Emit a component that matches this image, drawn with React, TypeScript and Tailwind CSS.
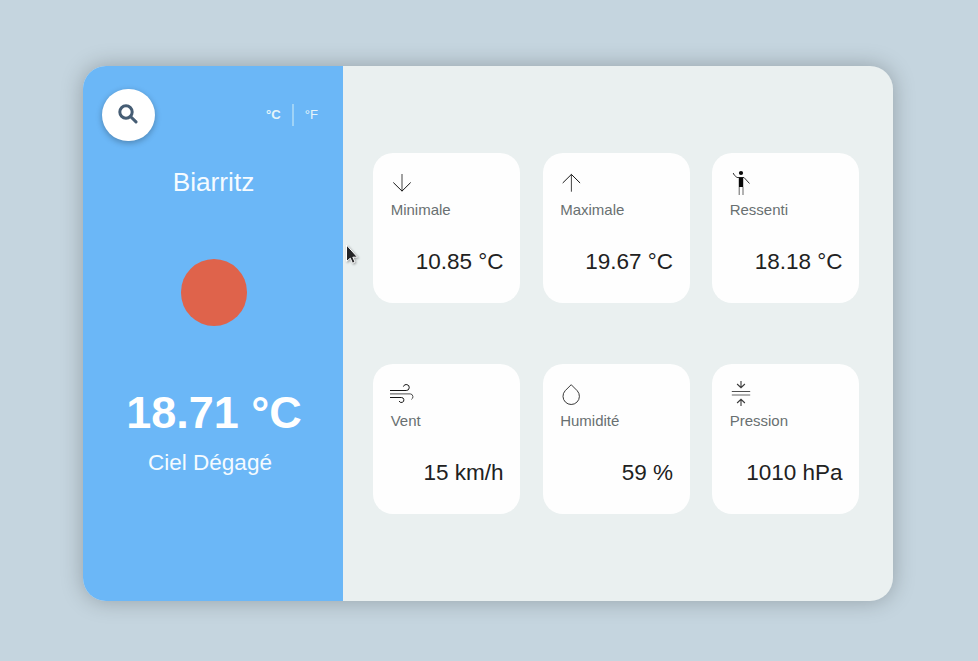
import type { ReactNode } from "react";

function Icon({ children }: { children: ReactNode }) {
  return (
    <svg width="24" height="30" viewBox="0 0 24 30" fill="none" stroke="#161616" strokeWidth="1" className="block overflow-visible">
      {children}
    </svg>
  );
}

const cards: { label: string; value: string; icon: ReactNode }[] = [
  {
    label: "Minimale",
    value: "10.85 °C",
    icon: (
      <Icon>
        <path d="M12 6V23.3" strokeOpacity=".8" />
        <path d="M3.3 14.5L12 23.1L20.7 14.5" />
      </Icon>
    ),
  },
  {
    label: "Maximale",
    value: "19.67 °C",
    icon: (
      <Icon>
        <path d="M11.4 23.7V6.3" strokeOpacity=".8" />
        <path d="M2.7 15L11.4 6.4L20.1 15" />
      </Icon>
    ),
  },
  {
    label: "Ressenti",
    value: "18.18 °C",
    icon: (
      <Icon>
        <circle cx="12" cy="5" r="2.1" fill="#080808" stroke="none" />
        <path d="M9.8 9.2H14.2V19H9.8Z" fill="#080808" stroke="none" />
        <path d="M4.2 5L5.2 7L8 9.5H15L20.5 15.5" strokeOpacity=".85" />
        <path d="M10.2 19V27M14 19V27" strokeOpacity=".65" />
      </Icon>
    ),
  },
  {
    label: "Vent",
    value: "15 km/h",
    icon: (
      <Icon>
        <path d="M0 11.5H16.2A3 3 0 1 0 13.4 7.6" />
        <path d="M0 14.9H20.3A2.9 2.9 0 0 1 21.3 20.4" strokeOpacity=".75" />
        <path d="M0 18.5H11.3A2.5 2.5 0 1 1 9.1 22" />
      </Icon>
    ),
  },
  {
    label: "Humidité",
    value: "59 %",
    icon: (
      <Icon>
        <path d="M11.2 5.7L5.2 11.7A8.2 8.2 0 1 0 17.2 11.7Z" strokeOpacity=".85" />
      </Icon>
    ),
  },
  {
    label: "Pression",
    value: "1010 hPa",
    icon: (
      <Icon>
        <path d="M12 2V8.7M8.1 5L12 8.7L15.9 5M12 27V20.3M8.1 24L12 20.3L15.9 24" strokeOpacity=".85" strokeWidth="1.1" />
        <path d="M2.8 12.5H21.2" strokeOpacity=".75" />
        <path d="M2.8 16H21.2" strokeOpacity=".33" strokeWidth="2" />
      </Icon>
    ),
  },
];

export default function App() {
  return (
    <div className="relative h-[661px] w-[978px] overflow-hidden bg-[#c5d5df] pl-[83px] pt-[66px] font-['Liberation_Sans',Arial,sans-serif]">
      <main className="flex h-[535px] w-[810px] overflow-hidden rounded-[23px] bg-[#eaf0f0] shadow-[0_0_22px_rgba(0,0,0,0.25)]">
        <aside className="flex w-[260px] shrink-0 flex-col items-center bg-[#6bb7f7] text-[#f5fbff]">
          <div className="mt-[23px] flex h-[52px] w-full items-center justify-between pl-[19px] pr-[25px]">
            <button aria-label="Rechercher" className="flex h-[52px] w-[53px] items-center justify-center rounded-full bg-white shadow-[0_2px_6px_rgba(0,0,0,0.28)]">
              <svg width="20" height="20" viewBox="0 0 20 20" fill="none" stroke="#465d74" strokeWidth="3" strokeLinecap="round" className="mr-px -mt-[3px] block">
                <circle cx="8" cy="8" r="6.2" />
                <path d="M12.5 12.5L18 17.9" />
              </svg>
            </button>
            <div className="flex items-center text-[13.1px] leading-none text-[#e6f5fa]">
              <b>°C</b>
              <span className="ml-[11px] mr-[11px] h-[22px] w-[2px] bg-[#9fd3f7]" />
              <span>°F</span>
            </div>
          </div>
          <h1 className="mt-[25px] pl-px text-[26.25px] leading-8">Biarritz</h1>
          <div className="ml-[2px] mt-[61px] size-[66.5px] rounded-full bg-[#df634b]" />
          <div className="mt-[62.5px] pl-[2px] text-[45px] font-bold leading-[50px] text-white">18.71 °C</div>
          <div className="mt-[11px] pr-[6px] text-[22.5px] leading-7">Ciel Dégagé</div>
        </aside>
        <section className="grid h-[448px] grid-cols-[147px_147px_147px] content-start gap-x-[22.5px] gap-y-[61px] pl-[30px] pt-[87px]">
          {cards.map((card) => (
            <article key={card.label} className="h-[150px] rounded-[20px] bg-[#fefefe] pl-[17px] pr-[16.4px] pt-[15px]">
              {card.icon}
              <h2 className="mt-[3px] pl-[0.7px] text-[15px] leading-[18px] text-[#697071]">{card.label}</h2>
              <p className="mt-[29px] text-right text-[22.5px] leading-7 text-[#212121]">{card.value}</p>
            </article>
          ))}
        </section>
      </main>
      <svg className="absolute left-[343px] top-[243px] drop-shadow-[1px_1px_1px_rgba(0,0,0,0.35)]" width="17" height="24" viewBox="0 0 17 24">
        <path d="M3.5 2V18.5L7.3 15.2L9.5 20.3L12 19L9.8 14.2H14.5Z" fill="#242426" stroke="#fff" strokeWidth="1" />
      </svg>
    </div>
  );
}
